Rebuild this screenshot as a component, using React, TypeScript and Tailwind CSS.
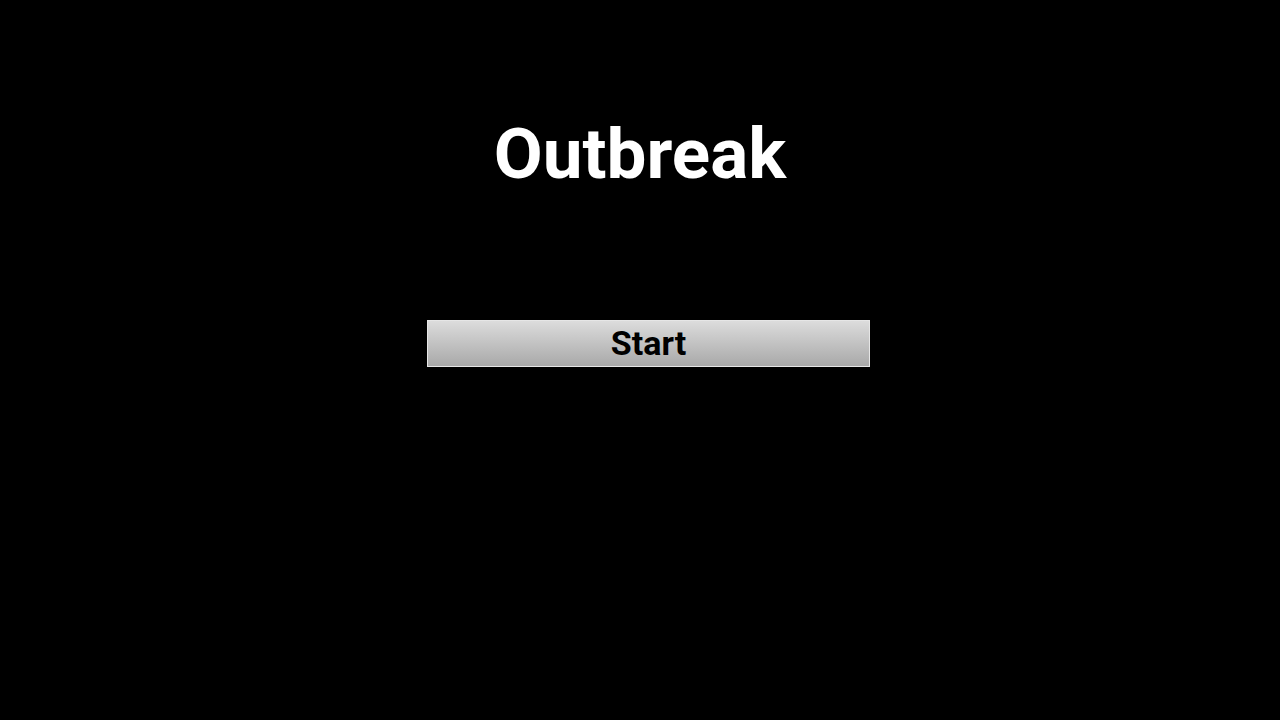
import * as React from 'react'

export default function App() {
  return (
    <div className="flex h-[720px] w-[1280px] flex-col items-center bg-black font-['Roboto',sans-serif]">
      <h1 className="mt-[118px] text-[71px] font-bold leading-none text-white">Outbreak</h1>
      <div className="mt-[131px] flex w-full">
        <button
          type="button"
          className="ml-[427px] flex h-[47px] w-[443px] items-center justify-center border border-[#e6e6e6] bg-gradient-to-b from-[#dcdcdc] to-[#a9a9a9] pb-[2px] text-[34px] font-bold leading-none text-black"
        >
          Start
        </button>
      </div>
    </div>
  )
}
